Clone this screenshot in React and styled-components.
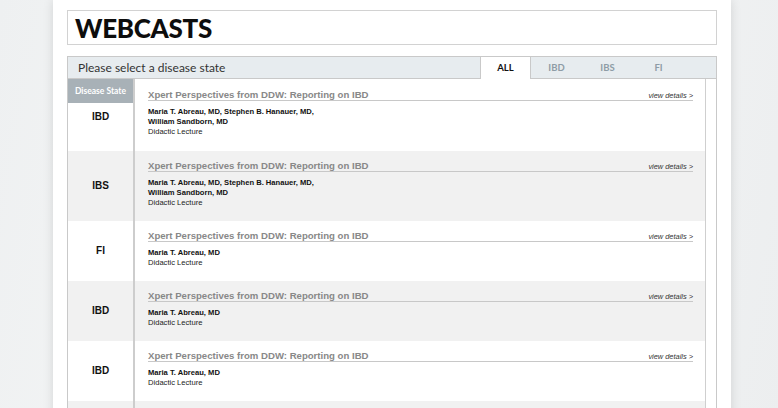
import React from "react";
import styled, { createGlobalStyle } from "styled-components";

const Global = createGlobalStyle`
  html, body { margin: 0; padding: 0; }
  body {
    background: linear-gradient(100deg, #eef0f1 0%, #f6f7f7 40%, #f3f4f5 60%, #eceeef 100%);
    min-height: 408px;
    overflow: hidden;
  }
`;

const Panel = styled.div`
  width: 678px;
  margin-left: 53px;
  min-height: 408px;
  background: #fff;
  box-shadow: 0 0 10px rgba(0, 0, 0, 0.12);
  padding: 10px 14px 0;
  box-sizing: border-box;
`;

const TitleBox = styled.div`
  height: 35px;
  border: 1px solid #d2d2d2;
  box-sizing: border-box;
  display: flex;
  align-items: center;
  padding-left: 7px;
  margin-bottom: 11px;
`;

const Heading = styled.h1`
  margin: 0;
  font-family: Lato, "Liberation Sans", sans-serif;
  font-weight: 900;
  font-size: 26px;
  color: #0d0d0d;
  letter-spacing: -0.3px;
  line-height: 1;
`;

const Listing = styled.div`
  border: 1px solid #c9c9c9;
  border-bottom: none;
`;

const Bar = styled.div`
  display: flex;
  height: 21px;
  background: #e7ecef;
  border-bottom: 1px solid #c9c9c9;
`;

const BarLabel = styled.div`
  flex: 1;
  padding-left: 10px;
  font-family: Lato, "Liberation Sans", sans-serif;
  font-size: 12px;
  line-height: 21px;
  color: #333;
`;

const Tabs = styled.div`
  display: flex;
  margin-right: 32px;
`;

const Tab = styled.div`
  width: 51px;
  box-sizing: border-box;
  height: ${(p) => (p.$active ? "22px" : "21px")};
  text-align: center;
  font-family: Lato, "Liberation Sans", sans-serif;
  font-weight: 700;
  font-size: 9.5px;
  line-height: 21px;
  color: ${(p) => (p.$active ? "#111" : "#8e9ca6")};
  background: ${(p) => (p.$active ? "#fff" : "transparent")};
  border-left: 1px solid ${(p) => (p.$active ? "#c9c9c9" : "transparent")};
  border-right: 1px solid ${(p) => (p.$active ? "#c9c9c9" : "transparent")};
`;

const Body = styled.div`
  display: flex;
`;

const Rows = styled.div`
  flex: 1;
`;

const Gutter = styled.div`
  width: 10px;
  border-left: 1px solid #cfcfcf;
`;

const Row = styled.div`
  display: grid;
  grid-template-columns: 67px 1fr;
  background: ${(p) => (p.$alt ? "#f1f1f1" : "#fff")};
`;

const StateCell = styled.div`
  display: flex;
  flex-direction: column;
  justify-content: ${(p) => (p.$first ? "flex-start" : "center")};
  border-right: 2px solid #cdcdcd;
`;

const StateHeader = styled.div`
  height: 24px;
  background: #a8b1b7;
  color: #fff;
  font-family: Lato, "Liberation Sans", sans-serif;
  font-weight: 700;
  font-size: 8.5px;
  line-height: 24px;
  text-align: center;
`;

const StateLabel = styled.div`
  margin-top: ${(p) => (p.$first ? "9px" : "0")};
  text-align: center;
  font-family: "Liberation Sans", Arial, sans-serif;
  font-weight: 700;
  font-size: 10px;
  line-height: 10px;
  color: #111;
`;

const Content = styled.div`
  padding: ${(p) => (p.$first ? "9px 12px 15px 13px" : "8px 12px 14px 13px")};
`;

const TitleLine = styled.div`
  display: flex;
  align-items: center;
  justify-content: space-between;
  height: 12px;
  border-bottom: 1px solid #c8c8c8;
`;

const ItemTitle = styled.div`
  font-family: "Liberation Sans", Arial, sans-serif;
  font-weight: 700;
  font-size: 9.6px;
  color: #888;
`;

const Details = styled.a`
  font-family: "Liberation Sans", Arial, sans-serif;
  font-style: italic;
  font-size: 7.4px;
  color: #333;
  text-decoration: none;
  padding-top: 2px;
`;

const Meta = styled.div`
  margin-top: 6px;
  font-family: "Liberation Sans", Arial, sans-serif;
  font-size: 7.6px;
  color: #111;
`;

const Names = styled.div`
  font-weight: 700;
  line-height: 10px;
`;

const Kind = styled.div`
  line-height: 9px;
  color: #222;
`;

const items = [
  { state: "IBD", names: ["Maria T. Abreau, MD, Stephen B. Hanauer, MD,", "William Sandborn, MD"] },
  { state: "IBS", names: ["Maria T. Abreau, MD, Stephen B. Hanauer, MD,", "William Sandborn, MD"] },
  { state: "FI", names: ["Maria T. Abreau, MD"] },
  { state: "IBD", names: ["Maria T. Abreau, MD"] },
  { state: "IBD", names: ["Maria T. Abreau, MD"] },
  { state: "IBS", names: ["Maria T. Abreau, MD"] },
];

export default function App() {
  return (
    <>
      <Global />
      <Panel>
        <TitleBox>
          <Heading>WEBCASTS</Heading>
        </TitleBox>
        <Listing>
          <Bar>
            <BarLabel>Please select a disease state</BarLabel>
            <Tabs>
              <Tab $active>ALL</Tab>
              <Tab>IBD</Tab>
              <Tab>IBS</Tab>
              <Tab>FI</Tab>
            </Tabs>
          </Bar>
          <Body>
            <Rows>
              {items.map((it, i) => (
                <Row key={i} $alt={i % 2 === 1}>
                  <StateCell $first={i === 0}>
                    {i === 0 && <StateHeader>Disease State</StateHeader>}
                    <StateLabel $first={i === 0}>{it.state}</StateLabel>
                  </StateCell>
                  <Content $first={i === 0}>
                    <TitleLine>
                      <ItemTitle>Xpert Perspectives from DDW: Reporting on IBD</ItemTitle>
                      <Details href="#">view details &gt;</Details>
                    </TitleLine>
                    <Meta>
                      <Names>
                        {it.names.map((n, j) => (
                          <div key={j}>{n}</div>
                        ))}
                      </Names>
                      <Kind>Didactic Lecture</Kind>
                    </Meta>
                  </Content>
                </Row>
              ))}
            </Rows>
            <Gutter />
          </Body>
        </Listing>
      </Panel>
    </>
  );
}
